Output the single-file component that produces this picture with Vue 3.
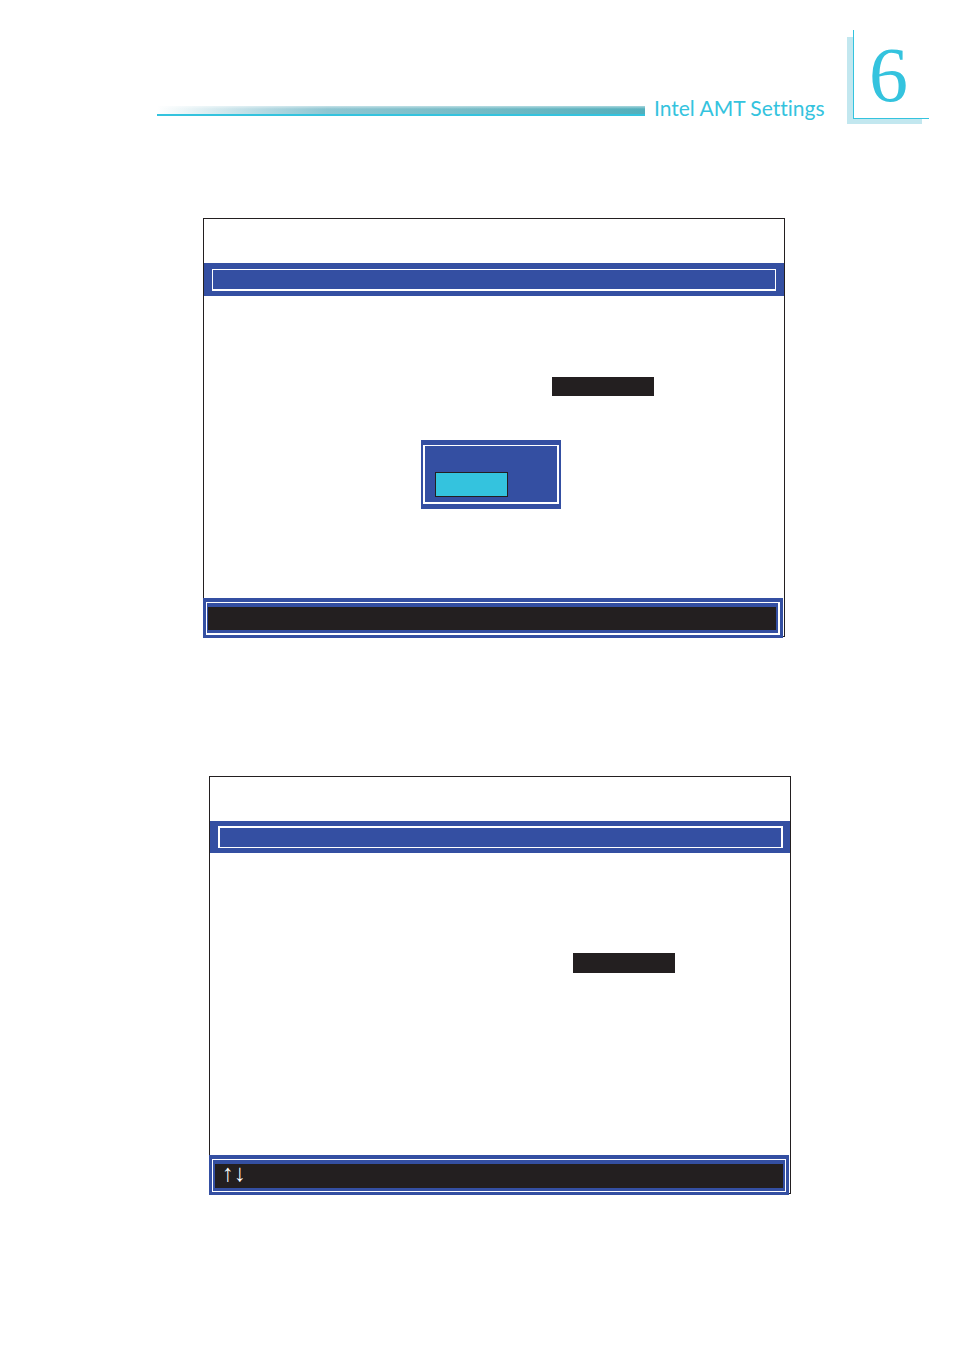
<template>
  <main class="page">
    <header class="page-header">
      <div class="header-bar"></div>
      <h1 class="header-title">Intel AMT Settings</h1>
      <div class="chapter">6</div>
    </header>

    <section v-for="s in screens" :key="s.name" class="screen" :class="s.name">
      <div class="screen-top"></div>
      <div class="screen-title"><div class="title-frame"></div></div>
      <div class="screen-body">
        <div class="value"></div>
        <div v-if="s.popup" class="popup">
          <div class="popup-frame">
            <button type="button" class="popup-option"></button>
          </div>
        </div>
      </div>
      <div class="screen-footer">
        <div class="footer-frame">
          <div class="footer-keys">{{ s.keys }}</div>
        </div>
      </div>
    </section>
  </main>
</template>

<script setup>
const screens = [
  { name: 'first', popup: true, keys: '' },
  { name: 'second', popup: false, keys: '↑↓' },
]
</script>

<style>
body { margin: 0; background: #fff; }
</style>

<style scoped>
.page {
  box-sizing: border-box;
  min-height: 100vh;
  padding-top: 30px;
}
.page-header {
  display: flex;
  align-items: flex-start;
  padding: 0 25px 0 157px;
  isolation: isolate;
  color: #34c3de;
}
.header-bar {
  flex: 1;
  height: 8px;
  margin-top: 76px;
  border-bottom: 2px solid #34c3de;
  background:
    linear-gradient(to bottom, rgba(255, 255, 255, 0.5), transparent 3px),
    linear-gradient(to right, #fff, #b5d9e2 22%, #8fc6d2 35%, #7abdc8 60%, #52afbc);
}
.header-title {
  box-sizing: border-box;
  width: 208px;
  margin: 66px 0 0;
  padding-left: 9px;
  font-family: Lato, "Liberation Sans", sans-serif;
  font-size: 21px;
  font-weight: 400;
  font-variant-ligatures: none;
  line-height: 23px;
  white-space: nowrap;
}
.chapter {
  position: relative;
  box-sizing: border-box;
  width: 76px;
  height: 89px;
  border-left: 1px solid #34c3de;
  border-bottom: 1px solid #34c3de;
  background: #fff;
  font-family: "Liberation Serif", serif;
  font-size: 78px;
  line-height: 90px;
  padding-left: 15px;
}
.chapter::before {
  content: '';
  position: absolute;
  z-index: -1;
  top: 7px;
  left: -7px;
  width: 75px;
  height: 87px;
  background: #c2e7ef;
}

.screen {
  border: 1px solid #231f20;
}
.first { margin: 99px 169px 0 203px; }
.second { margin: 139px 163px 0 209px; }
.screen-top { height: 44px; }
.screen-title {
  box-sizing: border-box;
  height: 33px;
  padding: 6px 8px 5px;
  background: #344fa2;
}
.second .screen-title {
  height: 32px;
  padding: 5px 7px 5px 8px;
}
.title-frame {
  box-sizing: border-box;
  height: 100%;
  border: 1px solid #fff;
  border-bottom-width: 2px;
}
.second .title-frame {
  border-width: 2px 2px 1px;
}
.screen-body {
  position: relative;
  box-sizing: border-box;
  height: 302px;
  padding: 81px 0 0 348px;
}
.second .screen-body { padding: 100px 0 0 363px; }
.value {
  width: 102px;
  height: 19px;
  background: #231f20;
}
.second .value { height: 20px; }

.popup {
  position: absolute;
  top: 144px;
  left: 217px;
  box-sizing: border-box;
  width: 140px;
  height: 69px;
  padding: 5px 2px;
  background: #344fa2;
}
.popup-frame {
  box-sizing: border-box;
  height: 59px;
  padding: 26px 10px 0;
  border: 2px solid #fff;
  border-top-width: 1px;
}
.popup-option {
  display: block;
  box-sizing: border-box;
  width: 73px;
  height: 25px;
  padding: 0;
  border: 1px solid #231f20;
  border-radius: 0;
  background: #34c3de;
}

.screen-footer {
  position: relative;
  box-sizing: border-box;
  height: 40px;
  margin: 0 1px -2px -1px;
  padding: 4px 3px 3px;
  background: #344fa2;
}
.footer-frame {
  box-sizing: border-box;
  height: 100%;
  padding: 4px 2px 3px 1px;
  border: 1px solid #fff;
  border-right-width: 2px;
  border-bottom-width: 2px;
}
.second .footer-frame {
  padding: 4px 2px 3px;
  border-width: 1px;
}
.footer-keys {
  box-sizing: border-box;
  height: 100%;
  padding-left: 7px;
  background: #231f20;
  color: #fff;
  font-family: "Liberation Serif", serif;
  font-size: 24px;
  line-height: 19px;
}
</style>
